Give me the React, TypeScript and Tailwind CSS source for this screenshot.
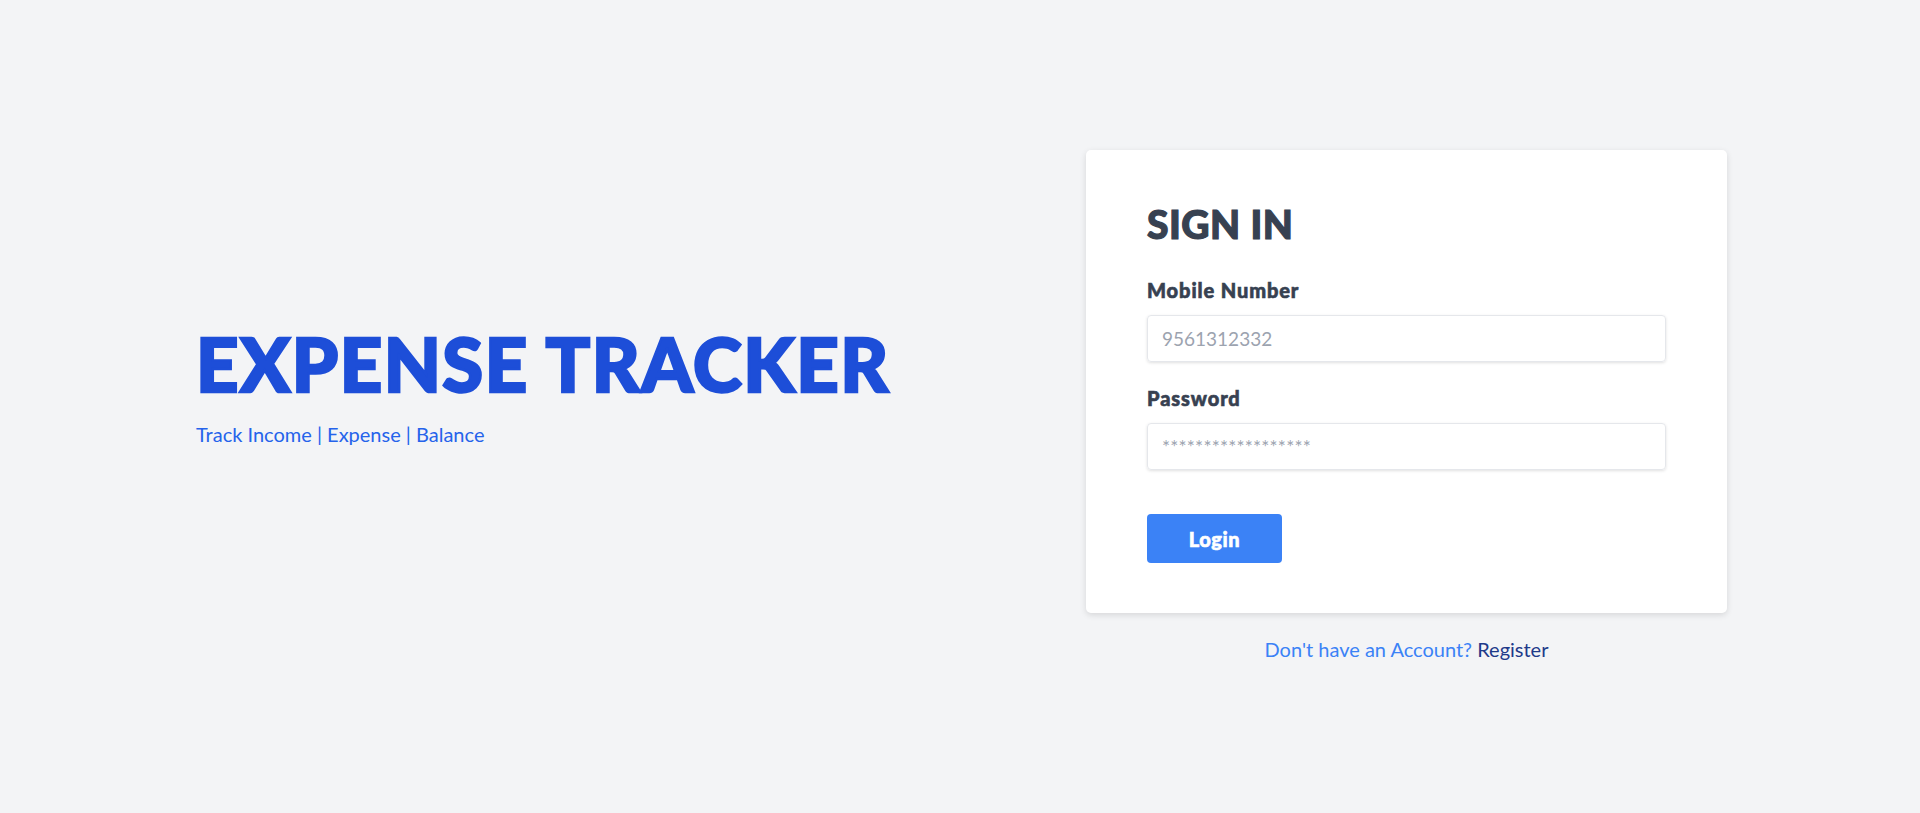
import { useState } from 'react';

export default function App() {
  const [mobile, setMobile] = useState('');
  const [password, setPassword] = useState('');

  return (
    <div className="min-h-screen w-full bg-[#f3f4f6] font-['Lato',sans-serif] flex items-center justify-between pl-[196px] pr-[193px]">
      {/* Brand */}
      <div className="flex flex-col -mt-[45px]">
        <h1 className="text-[74px] leading-[88px] font-black tracking-[1.5px] text-[#1d4ed8] [-webkit-text-stroke:2.5px_#1d4ed8]">EXPENSE TRACKER</h1>
        <p className="text-[20px] leading-[28px] text-[#2563eb] mt-[12px]">Track Income | Expense | Balance</p>
      </div>

      {/* Sign in */}
      <div className="w-[641px] flex flex-col">
        <div className="bg-white rounded-[5px] shadow-[0_2px_6px_rgba(0,0,0,0.12)] pt-[50px] pb-[50px] px-[61px]">
          <h2 className="text-[39px] leading-[48px] font-black tracking-[0.5px] text-[#374151] [-webkit-text-stroke:1.2px_#374151]">SIGN IN</h2>

          <label className="block mt-[28px] text-[20px] leading-[28px] font-black tracking-[0.9px] text-[#374151] [-webkit-text-stroke:0.6px_#374151]">Mobile Number</label>
          <input
            value={mobile}
            onChange={(e) => setMobile(e.target.value)}
            placeholder="9561312332"
            className="mt-[11px] w-full h-[47px] px-[14px] rounded-[4px] border border-[#e5e7eb] shadow-[0_1px_3px_rgba(0,0,0,0.12)] text-[19px] text-[#374151] placeholder:text-[#9ca3af] outline-none"
          />

          <label className="block mt-[22px] text-[20px] leading-[28px] font-black tracking-[0.9px] text-[#374151] [-webkit-text-stroke:0.6px_#374151]">Password</label>
          <input
            type="password"
            value={password}
            onChange={(e) => setPassword(e.target.value)}
            placeholder="******************"
            className="mt-[11px] w-full h-[47px] px-[14px] rounded-[4px] border border-[#e5e7eb] shadow-[0_1px_3px_rgba(0,0,0,0.12)] text-[19px] tracking-[0.2px] text-[#374151] placeholder:text-[#9ca3af] outline-none"
          />

          <button className="mt-[44px] w-[135px] h-[49px] rounded-[4px] bg-[#3b82f6] text-white text-[20px] font-black tracking-[0.6px] [-webkit-text-stroke:0.6px_#ffffff]">
            Login
          </button>
        </div>

        <p className="mt-[22px] text-center text-[20px] leading-[28px] text-[#3b82f6]">
          Don't have an Account? <a href="#" className="text-[#1e3a8a]">Register</a>
        </p>
      </div>
    </div>
  );
}
